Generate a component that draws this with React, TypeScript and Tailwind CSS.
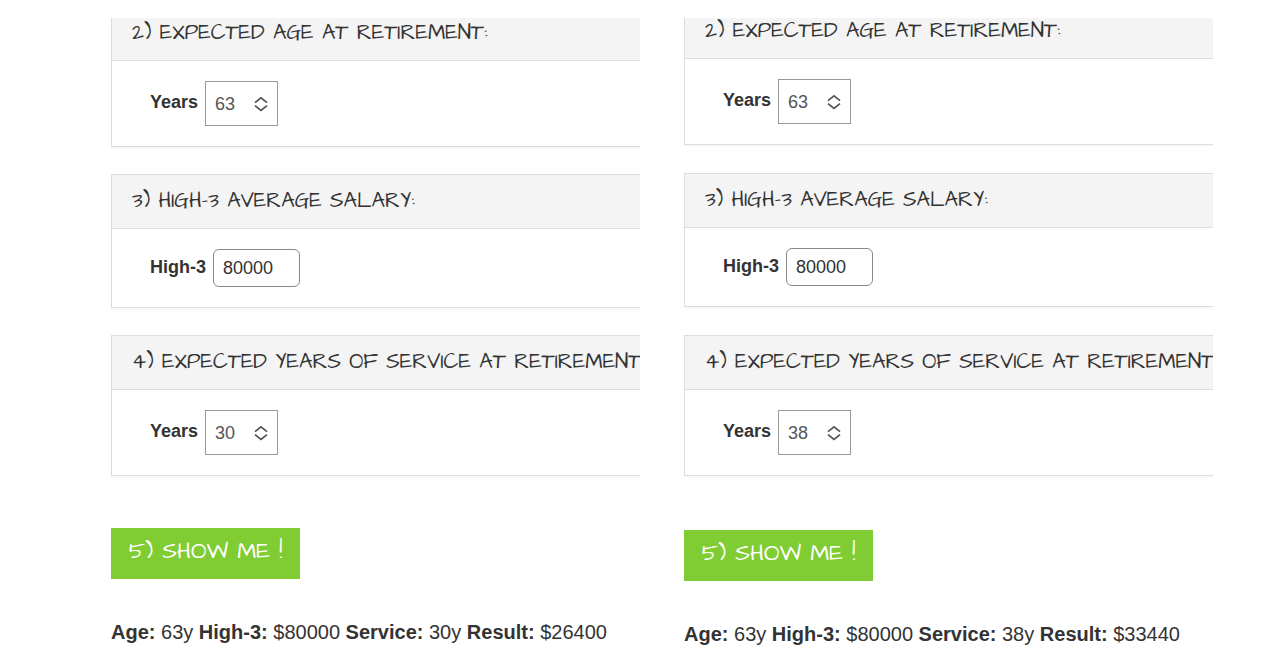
import React, { useId, useState } from 'react';
import { clsx } from 'clsx';

interface Estimate {
  age: number;
  salary: number;
  service: number;
}

interface CalculatorProps {
  initial: Estimate;
  gapClassName: string;
  firstClassName: string;
  resultClassName: string;
}

const AGES = Array.from({ length: 31 }, (_, i) => 50 + i);
const SERVICE_YEARS = Array.from({ length: 46 }, (_, i) => 5 + i);

// 1.1% multiplier applies at 62+ with at least 20 years of service
function getPension({ age, salary, service }: Estimate) {
  const perMille = age >= 62 && service >= 20 ? 11 : 10;
  return Math.round((salary * service * perMille) / 1000);
}

function Panel({ title, className, children }: { title: string; className?: string; children: React.ReactNode }) {
  return (
    <section className={clsx('border-y border-l border-[#dddddd] bg-white shadow-xs', className)}>
      <h2 className="h-[54px] border-b border-[#dddddd] bg-[#f4f4f4] pl-5 font-['Architects_Daughter',cursive] text-[21px] leading-[51px] whitespace-nowrap text-[#333333] uppercase">
        {title}
      </h2>
      <div className="flex items-center py-5 pl-[38px] text-lg text-[#333333]">{children}</div>
    </section>
  );
}

function YearsSelect({ value, options, onChange }: { value: number; options: number[]; onChange: (value: number) => void }) {
  const id = useId();

  return (
    <>
      <label htmlFor={id} className="mr-[7px] pb-[3px] font-bold">Years</label>
      <div className="relative">
        <select
          id={id}
          value={value}
          onChange={(e) => onChange(Number(e.target.value))}
          className="block h-[45px] w-[73px] appearance-none border border-[#999999] bg-white pl-[9px] text-lg text-[#555555]"
        >
          {options.map((n) => (
            <option key={n} value={n}>{n}</option>
          ))}
        </select>
        <svg
          viewBox="0 0 14 16"
          className="pointer-events-none absolute inset-y-0 right-2.5 my-auto h-4 w-3.5"
          fill="none"
          stroke="#555555"
          strokeWidth="1.8"
        >
          <path d="M1 6.6 7 1.8l6 4.8M1 9.6l6 4.8 6-4.8" />
        </svg>
      </div>
    </>
  );
}

function Calculator({ initial, gapClassName, firstClassName, resultClassName }: CalculatorProps) {
  const [form, setForm] = useState(initial);
  const [shown, setShown] = useState(initial);
  const salaryId = useId();

  return (
    <form
      className="flex min-w-0 flex-col overflow-hidden"
      onSubmit={(e) => {
        e.preventDefault();
        setShown(form);
      }}
    >
      <div className={clsx('flex flex-col', gapClassName)}>
        <Panel title="2) Expected age at retirement:" className={firstClassName}>
          <YearsSelect value={form.age} options={AGES} onChange={(age) => setForm({ ...form, age })} />
        </Panel>

        <Panel title="3) High-3 average salary:">
          <label htmlFor={salaryId} className="mr-[7px] pb-[3px] font-bold">High-3</label>
          <input
            id={salaryId}
            type="text"
            inputMode="numeric"
            value={form.salary}
            onChange={(e) => setForm({ ...form, salary: Number(e.target.value) || 0 })}
            className="h-[38px] w-[87px] rounded-md border border-[#888888] bg-white px-[9px] text-lg text-[#333333]"
          />
        </Panel>

        <Panel title="4) Expected years of service at retirement:">
          <YearsSelect value={form.service} options={SERVICE_YEARS} onChange={(service) => setForm({ ...form, service })} />
        </Panel>
      </div>

      <div className={resultClassName}>
        <button
          type="submit"
          className="block h-[51px] w-[189px] bg-[#80cc33] pb-1 text-center font-['Architects_Daughter',cursive] text-[23px] text-white uppercase"
        >
          5) Show me !
        </button>
        <p className="mt-10 text-xl leading-[26px] whitespace-nowrap text-[#333333]">
          <b>Age:</b> {shown.age}y <b>High-3:</b> ${shown.salary} <b>Service:</b> {shown.service}y{' '}
          <b>Result:</b> ${getPension(shown)}
        </p>
      </div>
    </form>
  );
}

export default function App() {
  return (
    <main className="grid min-h-screen grid-cols-2 gap-11 bg-white pt-[18px] pr-[67px] pl-[111px] font-['Liberation_Sans',Arial,sans-serif]">
      <Calculator
        initial={{ age: 63, salary: 80000, service: 30 }}
        gapClassName="gap-[27px]"
        firstClassName="-mt-3"
        resultClassName="pt-[52px]"
      />
      <Calculator
        initial={{ age: 63, salary: 80000, service: 38 }}
        gapClassName="gap-7"
        firstClassName="-mt-3.5"
        resultClassName="pt-[54px]"
      />
    </main>
  );
}
